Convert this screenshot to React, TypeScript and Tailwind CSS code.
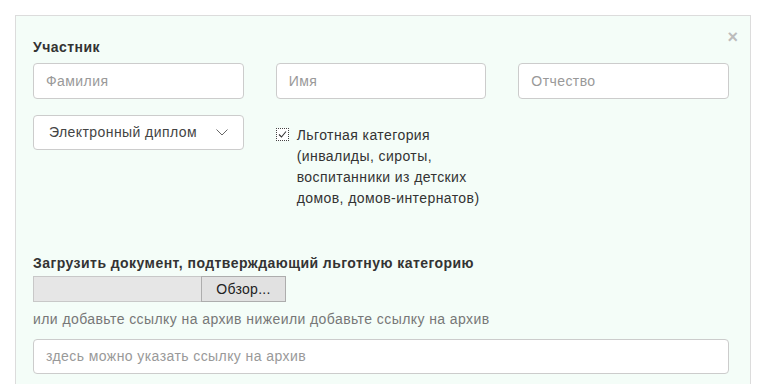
import React from "react";

export default function App() {
  const font = { fontFamily: '"Liberation Sans", Arial, sans-serif' };
  return (
    <div className="w-[759px] h-[384px] overflow-hidden bg-white pl-[15px] pt-[15px] pr-[8px] tracking-[0.42px]" style={font}>
      <div className="relative h-[400px] border border-[#dcdcdc] bg-[#f4fdf8] pl-[17px] pr-[21px] pt-[22px] text-[#333]">
        <span className="absolute right-[12px] top-[12px] text-[18px] font-bold leading-none tracking-normal text-[#bcbcbc]">×</span>
        <div className="text-[14px] font-bold leading-[18px] tracking-[0.45px]">Участник</div>
        <div className="mt-[7px] grid grid-cols-3 gap-x-[32px]">
          {["Фамилия", "Имя", "Отчество"].map((p) => (
            <div key={p} className="flex h-[36px] items-center rounded-[4px] border border-[#cccccc] bg-white px-[12px] text-[14px] text-[#999]">
              {p}
            </div>
          ))}
        </div>
        <div className="mt-[16px] grid grid-cols-3 gap-x-[32px]">
          <div className="flex h-[35px] items-center justify-between rounded-[4px] border border-[#cccccc] bg-white pl-[15px] pr-[15px] text-[14px] text-[#444]">
            <span>Электронный диплом</span>
            <svg width="12" height="7" viewBox="0 0 12 7" fill="none">
              <path d="M0.5 0.5 L6 6 L11.5 0.5" stroke="#666" strokeWidth="1" />
            </svg>
          </div>
          <div className="col-span-2 flex items-start pt-[10px]">
            <div className="mt-[3px] flex h-[13px] w-[13px] items-center justify-center border border-dotted border-[#444] bg-white">
              <svg width="11" height="11" viewBox="0 0 11 11" fill="none">
                <path d="M2 5.5 L4.5 8 L9 2.5" stroke="#333" strokeWidth="1.1" />
              </svg>
            </div>
            <div className="ml-[8px] w-[200px] text-[14px] leading-[21px] text-[#333]">
              Льготная категория (инвалиды, сироты, воспитанники из детских домов, домов-интернатов)
            </div>
          </div>
        </div>
        <div className="mt-[45px] text-[14px] font-bold leading-[18px] tracking-[0.45px]">
          Загрузить документ, подтверждающий льготную категорию
        </div>
        <div className="mt-[4px] flex h-[26px] w-[253px] tracking-normal">
          <div className="h-full w-[168px] border border-r-0 border-[#c8c8c8] bg-[#e6e6e6]"></div>
          <div className="flex h-full flex-1 items-center justify-center border border-[#adadad] bg-[#e1e1e1] text-[14px] tracking-[0.3px] text-[#222]">
            Обзор...
          </div>
        </div>
        <div className="mt-[8px] text-[14px] leading-[18px] text-[#777]">
          или добавьте ссылку на архив нижеили добавьте ссылку на архив
        </div>
        <div className="mt-[11px] flex h-[35px] items-center rounded-[4px] border border-[#cccccc] bg-white px-[12px] text-[14px] text-[#999]">
          здесь можно указать ссылку на архив
        </div>
      </div>
    </div>
  );
}
